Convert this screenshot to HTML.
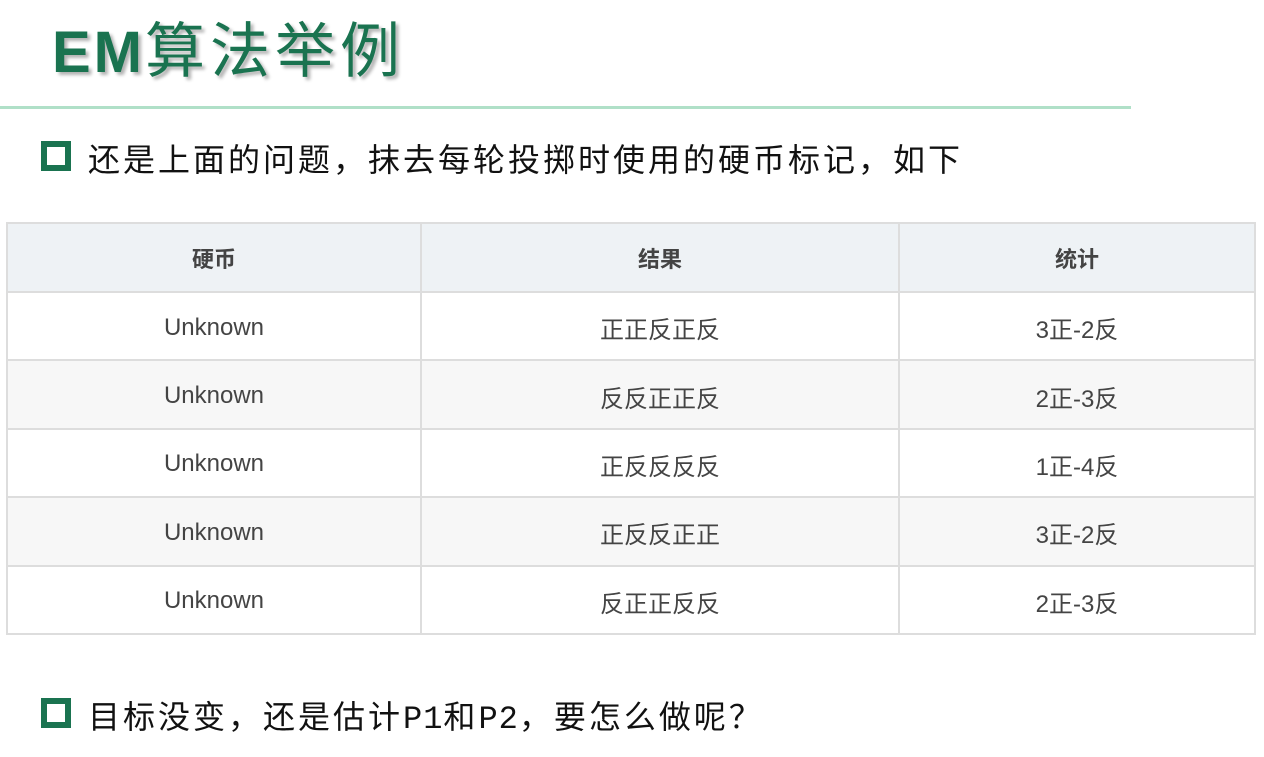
<!DOCTYPE html>
<html><head><meta charset="utf-8"><style>
body{margin:0;width:1264px;height:757px;background:#fff;position:relative;overflow:hidden;font-family:"Liberation Sans","Noto Sans CJK SC",sans-serif}
.title{position:absolute;left:52px;top:16px;font-size:60px;color:#1a7350;line-height:72px;text-shadow:3px 3px 3px rgba(0,0,0,.3);letter-spacing:5px;white-space:nowrap}
.title b{font-size:58px;letter-spacing:3px}
.line{position:absolute;left:0;top:106px;width:1131px;height:3px;background:#b0e0c8}
.b{position:absolute;left:41px;width:18px;height:18px;border:6px solid #1a7350}
.t{position:absolute;left:88px;font-size:32px;color:#111;line-height:40px;letter-spacing:3px;white-space:nowrap}
.m{font-family:"Liberation Mono",monospace;letter-spacing:1px}
table{position:absolute;left:6px;top:222px;width:1250px;border-collapse:collapse;font-size:24px;color:#444}
td,th{border:2px solid #ddd;text-align:center;padding:0}
th{background:#eef2f5;font-weight:bold;font-size:22px;color:#444;height:67px}
td{padding-top:3px;height:63.4px}
tr:nth-child(odd) td{background:#f7f7f7}
</style></head><body>
<div class="title"><b>EM</b>算法举例</div>
<div class="line"></div>
<div class="b" style="top:141px"></div>
<div class="t" style="top:140px">还是上面的问题，抹去每轮投掷时使用的硬币标记，如下</div>
<table>
<tr><th style="width:412px">硬币</th><th style="width:476px">结果</th><th>统计</th></tr>
<tr><td>Unknown</td><td>正正反正反</td><td>3正-2反</td></tr>
<tr><td>Unknown</td><td>反反正正反</td><td>2正-3反</td></tr>
<tr><td>Unknown</td><td>正反反反反</td><td>1正-4反</td></tr>
<tr><td>Unknown</td><td>正反反正正</td><td>3正-2反</td></tr>
<tr><td>Unknown</td><td>反正正反反</td><td>2正-3反</td></tr>
</table>
<div class="b" style="top:698px"></div>
<div class="t" style="top:697px;letter-spacing:3px">目标没变，还是估计<span class="m">P1</span>和<span class="m">P2</span>，要怎么做呢？</div>
</body></html>
